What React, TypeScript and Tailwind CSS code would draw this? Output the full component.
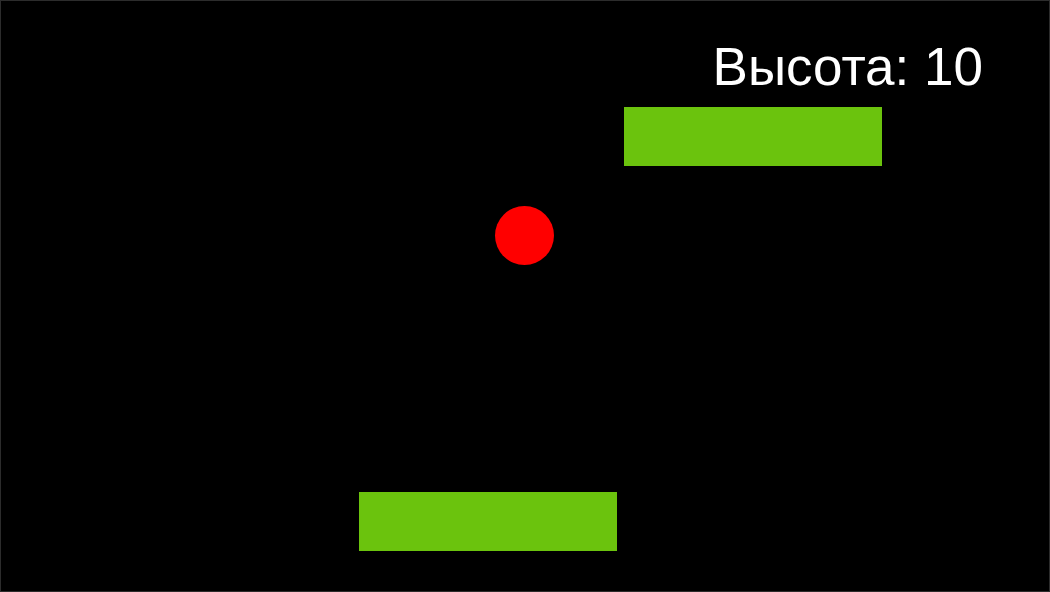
export default function App() {
  return (
    <div className="h-[592px] w-[1050px] border border-[#2c2c2c] bg-black">
      <div className="relative h-full w-full overflow-hidden">
        {/* score */}
        <div className="absolute right-[66px] top-[39px] font-['Liberation_Sans',Arial,sans-serif] text-[53px] leading-none text-white">
          Высота: 10
        </div>
        {/* platforms */}
        <div className="absolute left-[623px] top-[106px] h-[59px] w-[258px] bg-[#6bc30d]" />
        <div className="absolute left-[358px] top-[491px] h-[59px] w-[258px] bg-[#6bc30d]" />
        {/* ball */}
        <div className="absolute left-[494px] top-[205px] h-[59px] w-[59px] rounded-full bg-[#ff0000]" />
      </div>
    </div>
  );
}
